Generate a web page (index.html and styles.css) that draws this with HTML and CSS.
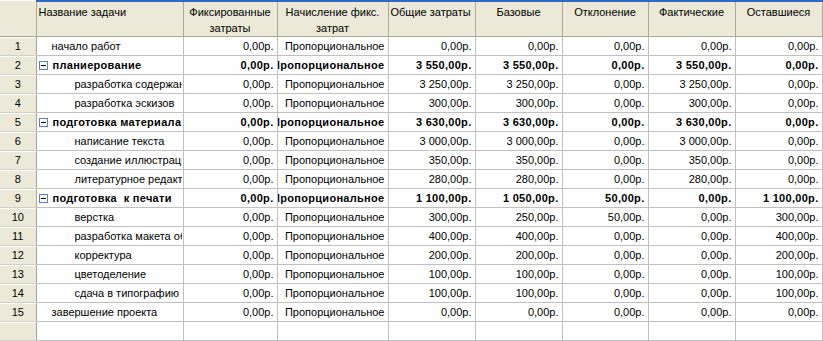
FILE: index.html
```html
<!DOCTYPE html>
<html lang="ru">
<head>
<meta charset="utf-8">
<title>Затраты</title>
<link rel="stylesheet" href="styles.css">
</head>
<body>
<table class="grid">
  <colgroup>
    <col class="c-id"><col class="c-name"><col class="c-fix"><col class="c-acc"><col class="c-num"><col class="c-num"><col class="c-var"><col class="c-num"><col class="c-num">
  </colgroup>
  <thead>
    <tr>
      <th class="corner"></th>
      <th class="h-left">Название задачи</th>
      <th>Фиксированные затраты</th>
      <th>Начисление фикс. затрат</th>
      <th class="h-left">Общие затраты</th>
      <th>Базовые</th>
      <th>Отклонение</th>
      <th>Фактические</th>
      <th>Оставшиеся</th>
    </tr>
  </thead>
  <tbody>
    <tr><td class="id">1</td><td class="name l1"><div class="clip">начало работ</div></td><td class="n"><div class="r">0,00р.</div></td><td class="n"><div class="r">Пропорциональное</div></td><td class="n"><div class="r">0,00р.</div></td><td class="n"><div class="r">0,00р.</div></td><td class="n"><div class="r">0,00р.</div></td><td class="n"><div class="r">0,00р.</div></td><td class="n"><div class="r">0,00р.</div></td></tr>
    <tr class="sum"><td class="id">2</td><td class="name"><div class="clip"><span class="tog"></span>планиерование</div></td><td class="n"><div class="r">0,00р.</div></td><td class="n"><div class="r">Пропорциональное</div></td><td class="n"><div class="r">3 550,00р.</div></td><td class="n"><div class="r">3 550,00р.</div></td><td class="n"><div class="r">0,00р.</div></td><td class="n"><div class="r">3 550,00р.</div></td><td class="n"><div class="r">0,00р.</div></td></tr>
    <tr><td class="id">3</td><td class="name l2"><div class="clip">разработка содержания</div></td><td class="n"><div class="r">0,00р.</div></td><td class="n"><div class="r">Пропорциональное</div></td><td class="n"><div class="r">3 250,00р.</div></td><td class="n"><div class="r">3 250,00р.</div></td><td class="n"><div class="r">0,00р.</div></td><td class="n"><div class="r">3 250,00р.</div></td><td class="n"><div class="r">0,00р.</div></td></tr>
    <tr><td class="id">4</td><td class="name l2"><div class="clip">разработка эскизов</div></td><td class="n"><div class="r">0,00р.</div></td><td class="n"><div class="r">Пропорциональное</div></td><td class="n"><div class="r">300,00р.</div></td><td class="n"><div class="r">300,00р.</div></td><td class="n"><div class="r">0,00р.</div></td><td class="n"><div class="r">300,00р.</div></td><td class="n"><div class="r">0,00р.</div></td></tr>
    <tr class="sum"><td class="id">5</td><td class="name"><div class="clip"><span class="tog"></span>подготовка материала</div></td><td class="n"><div class="r">0,00р.</div></td><td class="n"><div class="r">Пропорциональное</div></td><td class="n"><div class="r">3 630,00р.</div></td><td class="n"><div class="r">3 630,00р.</div></td><td class="n"><div class="r">0,00р.</div></td><td class="n"><div class="r">3 630,00р.</div></td><td class="n"><div class="r">0,00р.</div></td></tr>
    <tr><td class="id">6</td><td class="name l2"><div class="clip">написание текста</div></td><td class="n"><div class="r">0,00р.</div></td><td class="n"><div class="r">Пропорциональное</div></td><td class="n"><div class="r">3 000,00р.</div></td><td class="n"><div class="r">3 000,00р.</div></td><td class="n"><div class="r">0,00р.</div></td><td class="n"><div class="r">3 000,00р.</div></td><td class="n"><div class="r">0,00р.</div></td></tr>
    <tr><td class="id">7</td><td class="name l2"><div class="clip">создание иллюстраций</div></td><td class="n"><div class="r">0,00р.</div></td><td class="n"><div class="r">Пропорциональное</div></td><td class="n"><div class="r">350,00р.</div></td><td class="n"><div class="r">350,00р.</div></td><td class="n"><div class="r">0,00р.</div></td><td class="n"><div class="r">350,00р.</div></td><td class="n"><div class="r">0,00р.</div></td></tr>
    <tr><td class="id">8</td><td class="name l2"><div class="clip">литературное редактирование</div></td><td class="n"><div class="r">0,00р.</div></td><td class="n"><div class="r">Пропорциональное</div></td><td class="n"><div class="r">280,00р.</div></td><td class="n"><div class="r">280,00р.</div></td><td class="n"><div class="r">0,00р.</div></td><td class="n"><div class="r">280,00р.</div></td><td class="n"><div class="r">0,00р.</div></td></tr>
    <tr class="sum"><td class="id">9</td><td class="name"><div class="clip"><span class="tog"></span>подготовка&nbsp; к печати</div></td><td class="n"><div class="r">0,00р.</div></td><td class="n"><div class="r">Пропорциональное</div></td><td class="n"><div class="r">1 100,00р.</div></td><td class="n"><div class="r">1 050,00р.</div></td><td class="n"><div class="r">50,00р.</div></td><td class="n"><div class="r">0,00р.</div></td><td class="n"><div class="r">1 100,00р.</div></td></tr>
    <tr><td class="id">10</td><td class="name l2"><div class="clip">верстка</div></td><td class="n"><div class="r">0,00р.</div></td><td class="n"><div class="r">Пропорциональное</div></td><td class="n"><div class="r">300,00р.</div></td><td class="n"><div class="r">250,00р.</div></td><td class="n"><div class="r">50,00р.</div></td><td class="n"><div class="r">0,00р.</div></td><td class="n"><div class="r">300,00р.</div></td></tr>
    <tr><td class="id">11</td><td class="name l2"><div class="clip">разработка макета обложки</div></td><td class="n"><div class="r">0,00р.</div></td><td class="n"><div class="r">Пропорциональное</div></td><td class="n"><div class="r">400,00р.</div></td><td class="n"><div class="r">400,00р.</div></td><td class="n"><div class="r">0,00р.</div></td><td class="n"><div class="r">0,00р.</div></td><td class="n"><div class="r">400,00р.</div></td></tr>
    <tr><td class="id">12</td><td class="name l2"><div class="clip">корректура</div></td><td class="n"><div class="r">0,00р.</div></td><td class="n"><div class="r">Пропорциональное</div></td><td class="n"><div class="r">200,00р.</div></td><td class="n"><div class="r">200,00р.</div></td><td class="n"><div class="r">0,00р.</div></td><td class="n"><div class="r">0,00р.</div></td><td class="n"><div class="r">200,00р.</div></td></tr>
    <tr><td class="id">13</td><td class="name l2"><div class="clip">цветоделение</div></td><td class="n"><div class="r">0,00р.</div></td><td class="n"><div class="r">Пропорциональное</div></td><td class="n"><div class="r">100,00р.</div></td><td class="n"><div class="r">100,00р.</div></td><td class="n"><div class="r">0,00р.</div></td><td class="n"><div class="r">0,00р.</div></td><td class="n"><div class="r">100,00р.</div></td></tr>
    <tr><td class="id">14</td><td class="name l2"><div class="clip">сдача в типографию</div></td><td class="n"><div class="r">0,00р.</div></td><td class="n"><div class="r">Пропорциональное</div></td><td class="n"><div class="r">100,00р.</div></td><td class="n"><div class="r">100,00р.</div></td><td class="n"><div class="r">0,00р.</div></td><td class="n"><div class="r">0,00р.</div></td><td class="n"><div class="r">100,00р.</div></td></tr>
    <tr><td class="id">15</td><td class="name l1"><div class="clip">завершение проекта</div></td><td class="n"><div class="r">0,00р.</div></td><td class="n"><div class="r">Пропорциональное</div></td><td class="n"><div class="r">0,00р.</div></td><td class="n"><div class="r">0,00р.</div></td><td class="n"><div class="r">0,00р.</div></td><td class="n"><div class="r">0,00р.</div></td><td class="n"><div class="r">0,00р.</div></td></tr>
    <tr><td class="id"></td><td></td><td></td><td></td><td></td><td></td><td></td><td></td><td></td></tr>
  </tbody>
</table>
</body>
</html>
```
FILE: styles.css
```css
html, body {
  margin: 0;
  padding: 0;
  background: #ffffff;
}
body {
  font-family: "Liberation Sans", Arial, sans-serif;
  font-size: 11px;
  color: #000000;
  overflow: hidden;
}
.grid {
  border-collapse: collapse;
  table-layout: fixed;
  width: 822px;
}
.c-id { width: 36px; }
.c-name { width: 147px; }
.c-fix { width: 94px; }
.c-acc { width: 111px; }
.c-num { width: 87px; }
.c-var { width: 86px; }

th {
  background: #ece9d8;
  font-weight: normal;
  height: 31px;
  padding: 2px 2px 0;
  line-height: 16px;
  vertical-align: top;
  text-align: center;
  border-top: 2px solid #316ac5;
  border-left: 1px solid #aca899;
  border-right: 1px solid #aca899;
  border-bottom: 1px solid #aca899;
}
th.corner {
  border-top: 0;
  border-left: 0;
}
th.h-left {
  text-align: left;
}
td {
  height: 18px;
  padding: 0;
  line-height: 18px;
  border: 1px solid #c0c0c0;
  white-space: nowrap;
  overflow: hidden;
}
td.id {
  background: #ece9d8;
  text-align: center;
  border-left: 0;
  border-right: 1px solid #aca899;
  border-bottom: 1px solid #d4d0c8;
  box-shadow: inset 0 1px 0 #ffffff;
}
.clip {
  overflow: hidden;
  white-space: nowrap;
  margin-right: 1px;
}
.name.l1 .clip { padding-left: 15px; }
.name.l2 .clip { padding-left: 38px; }
.sum .name .clip { padding-left: 2px; display: flex; align-items: center; }
.sum td { font-weight: bold; letter-spacing: 0.3px; }
.sum td.id { font-weight: normal; letter-spacing: 0; }
.tog {
  flex: none;
  width: 7px;
  height: 7px;
  border: 1px solid #5b7fcf;
  margin-right: 5px;
  position: relative;
  background: #ffffff;
}
.tog::after {
  content: "";
  position: absolute;
  left: 1px;
  top: 3px;
  width: 5px;
  height: 1px;
  background: #000000;
}
.r {
  display: flex;
  justify-content: flex-end;
  padding-right: 3px;
  overflow: hidden;
  white-space: nowrap;
}
```
